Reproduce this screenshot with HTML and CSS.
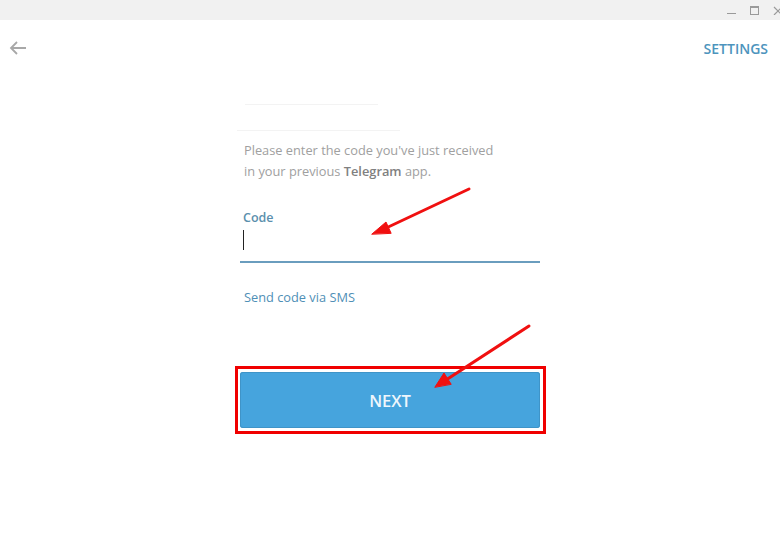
FILE: index.html
```html
<!DOCTYPE html>
<html lang="en">
<head>
  <meta charset="UTF-8">
  <title>Telegram - Enter code</title>
  <link rel="stylesheet" href="styles.css">
</head>
<body>

<!-- Window title bar -->
<div class="titlebar">
  <span class="win-btn min"></span>
  <span class="win-btn max"></span>
  <svg class="win-btn close" width="7" height="9" viewBox="0 0 7 9">
    <path d="M1 1l8 8M9 1l-8 8" stroke="#9a9a9a" stroke-width="1.2"/>
  </svg>
</div>

<!-- Top row: back + settings -->
<div class="topbar">
  <svg class="back" width="18" height="16" viewBox="0 0 18 16">
    <path d="M17 8H2M8 2L2 8l6 6" fill="none" stroke="#a8a8a8" stroke-width="1.8"/>
  </svg>
  <a class="settings">SETTINGS</a>
</div>

<div class="form">
  <div class="ghost ghost-a"></div>
  <div class="ghost ghost-b"></div>

  <p class="intro">Please enter the code you've just received<br>in your previous <b>Telegram</b> app.</p>

  <label class="field-label" for="code">Code</label>
  <div class="field">
    <span class="caret"></span>
  </div>

  <a class="sms">Send code via SMS</a>

  <div class="highlight">
    <button class="next">NEXT</button>
  </div>
</div>

<!-- Red annotation arrows drawn over the screen -->
<svg class="marks" width="780" height="547" viewBox="0 0 780 547">
  <g stroke="#f01010" stroke-width="3" stroke-linecap="round" fill="#f01010">
    <line x1="469" y1="189" x2="384" y2="229"/>
    <polygon points="372,234 386,222 391,233" stroke-width="1"/>
    <line x1="529" y1="326" x2="446" y2="380"/>
    <polygon points="435,387 444,373 451,384" stroke-width="1"/>
  </g>
</svg>

</body>
</html>
```

FILE: styles.css
```css
body {
  margin: 0;
  width: 780px;
  height: 547px;
  background: #fff;
  font-family: "Open Sans", "Noto Sans", sans-serif;
  position: relative;
  overflow: hidden;
}

.titlebar {
  height: 20px;
  background: #f1f1f1;
  display: flex;
  justify-content: flex-end;
  align-items: center;
  gap: 14px;
}
.win-btn {
  display: inline-block;
}
.win-btn.min {
  width: 9px;
  height: 1px;
  background: #9a9a9a;
  margin-top: 6px;
}
.win-btn.max {
  width: 7px;
  height: 6px;
  border: 1px solid #9a9a9a;
  border-top-width: 2px;
}

.topbar {
  display: flex;
  justify-content: space-between;
  align-items: center;
  height: 56px;
  padding: 0 12px 0 9px;
}
.back {
  display: block;
}
.settings {
  color: #4d94bd;
  font-size: 14px;
  font-weight: 600;
}

.form {
  width: 300px;
  margin: 0 auto;
  padding-top: 28px;
}
.ghost {
  height: 1px;
  background: #f3f3f3;
}
.ghost-a {
  width: 133px;
  margin-left: 5px;
}
.ghost-b {
  width: 163px;
  margin-top: 25px;
  margin-left: -3px;
}

.intro {
  margin: 9px 0 0 4px;
  font-size: 12.8px;
  line-height: 21px;
  color: #a0a0a0;
}
.intro b {
  font-weight: 600;
  color: #808080;
}

.field-label {
  display: block;
  margin: 27px 0 0 3px;
  font-size: 12.5px;
  font-weight: 600;
  color: #5b8fad;
  line-height: 18px;
}
.field {
  height: 31px;
  border-bottom: 2px solid #6a9dbe;
  padding: 3px 0 0 3px;
}
.caret {
  display: block;
  width: 1px;
  height: 20px;
  background: #222;
}

.sms {
  display: block;
  margin: 25px 0 0 4px;
  font-size: 12.8px;
  color: #4f8fb6;
  line-height: 18px;
}

.highlight {
  margin: 60px -6px 0 -5px;
  border: 3px solid #f00000;
  padding: 3px 3px 3px 2px;
}
.next {
  display: block;
  width: 100%;
  height: 56px;
  border: 0;
  border-radius: 3px;
  background: #46a4dd;
  color: #eef6fc;
  font-family: "Open Sans", "Noto Sans", sans-serif;
  font-size: 16.5px;
  font-weight: 600;
  box-shadow: 0 0 0 1px #3f94c8 inset;
}

.marks {
  position: absolute;
  left: 0;
  top: 0;
  pointer-events: none;
}
```
